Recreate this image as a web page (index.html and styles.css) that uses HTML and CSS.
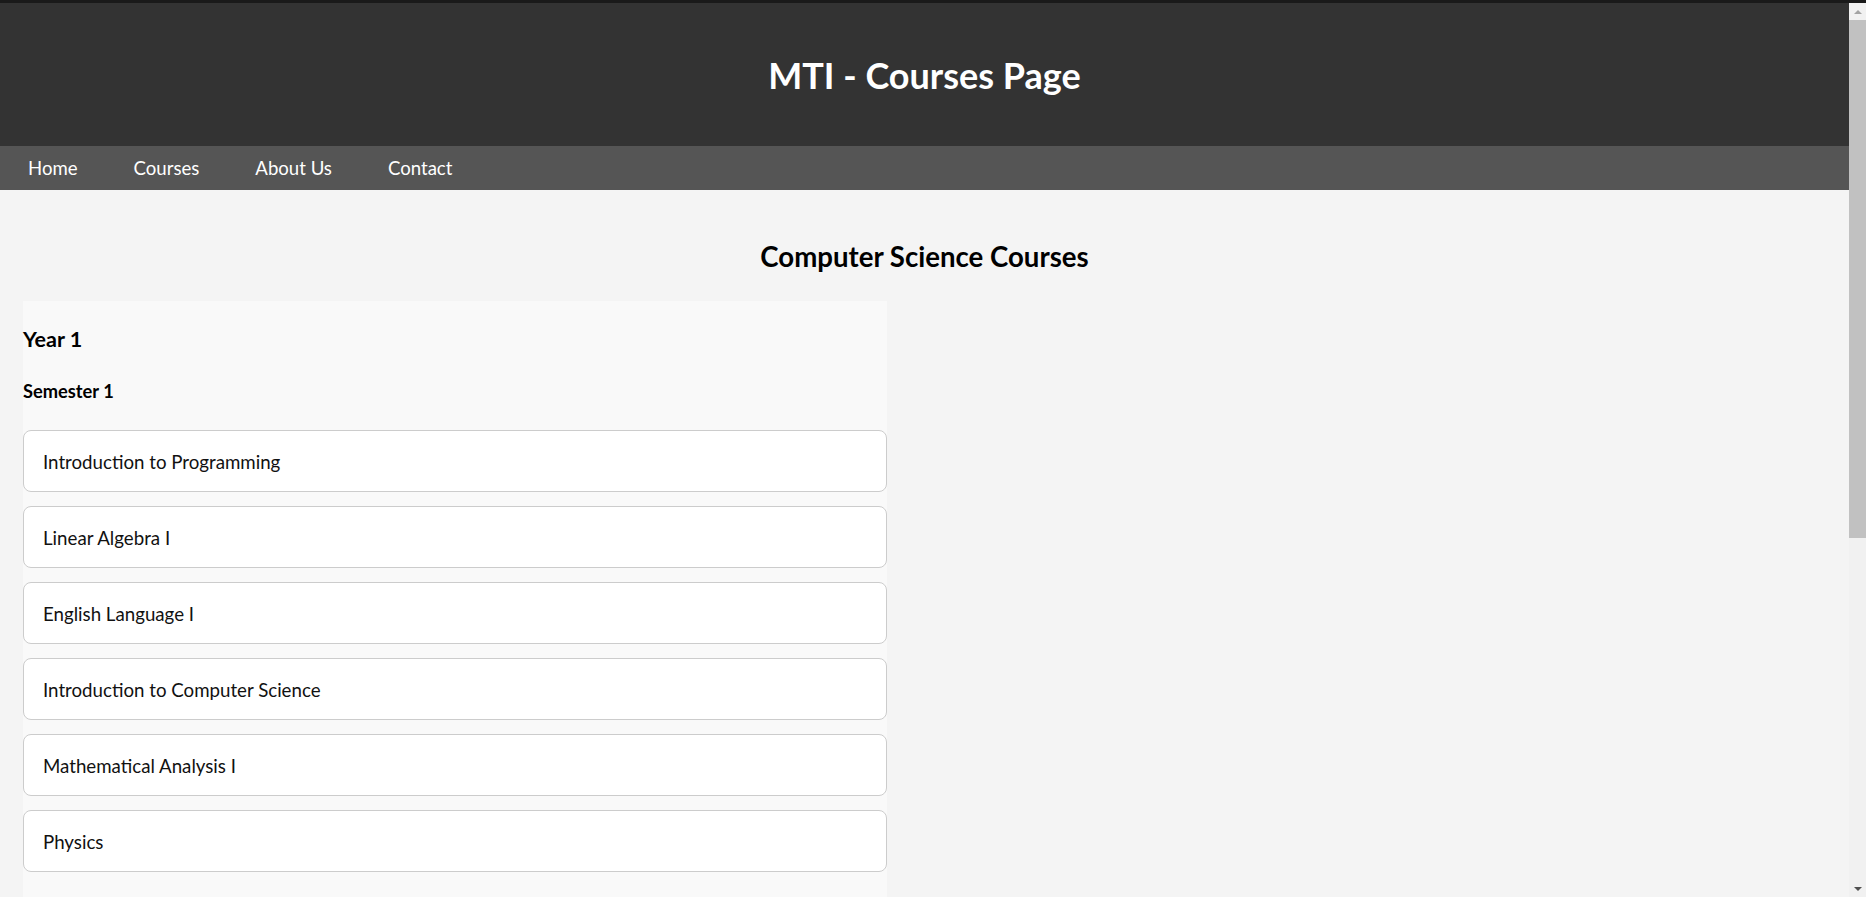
FILE: index.html
```html
<!DOCTYPE html>
<html lang="en">
<head>
<meta charset="utf-8">
<title>MTI - Courses Page</title>
<link rel="stylesheet" href="styles.css">
</head>
<body>
<header class="site-header">
  <h1 class="site-title">MTI - Courses Page</h1>
</header>
<nav class="main-nav">
  <ul class="nav-list">
    <li><a class="nav-link" href="#">Home</a></li>
    <li><a class="nav-link" href="#">Courses</a></li>
    <li><a class="nav-link" href="#">About Us</a></li>
    <li><a class="nav-link" href="#">Contact</a></li>
  </ul>
</nav>
<main class="content">
  <h2 class="page-title">Computer Science Courses</h2>
  <section class="year">
    <h3 class="year-title">Year 1</h3>
    <div class="semester">
      <h4 class="semester-title">Semester 1</h4>
      <ul class="course-list">
        <li class="course">Introduction to Programming</li>
        <li class="course">Linear Algebra I</li>
        <li class="course">English Language I</li>
        <li class="course">Introduction to Computer Science</li>
        <li class="course">Mathematical Analysis I</li>
        <li class="course">Physics</li>
      </ul>
    </div>
    <div class="semester">
      <h4 class="semester-title">Semester 2</h4>
      <ul class="course-list">
        <li class="course">Object Oriented Programming</li>
        <li class="course">Linear Algebra II</li>
        <li class="course">English Language II</li>
        <li class="course">Discrete Mathematics</li>
        <li class="course">Mathematical Analysis II</li>
        <li class="course">Electronics</li>
      </ul>
    </div>
  </section>
</main>
<div class="scrollbar" aria-hidden="true">
  <div class="scroll-btn"><span class="arrow arrow-up"></span></div>
  <div class="scroll-thumb"></div>
  <div class="scroll-fill"></div>
  <div class="scroll-btn"><span class="arrow arrow-down"></span></div>
</div>
</body>
</html>
```
FILE: styles.css
```css
html {
  background: #f4f4f4;
}
body {
  margin: 0 17px 0 0;
  background: #f4f4f4;
  color: #000;
  font-family: Lato, "Open Sans", sans-serif;
}
.site-header {
  background: #333;
  border-top: 3px solid #1a1a1a;
  height: 143px;
  display: flex;
  align-items: center;
  justify-content: center;
}
.site-title {
  margin: 0;
  color: #fff;
  font-size: 36px;
  font-weight: 700;
  line-height: 40px;
}
.main-nav {
  background: #555;
  height: 44px;
}
.nav-list {
  list-style: none;
  margin: 0;
  padding: 0;
  display: flex;
}
.nav-link {
  display: block;
  padding: 0 28px;
  line-height: 44px;
  color: #fff;
  text-decoration: none;
  font-size: 18.6px;
}
.content {
  padding: 0 23px 35px;
}
.page-title {
  margin: 50px 0 0;
  text-align: center;
  font-size: 27.6px;
  font-weight: 700;
  line-height: 34px;
}
.year {
  margin-top: 27px;
  width: 864px;
  background: #f9f9f9;
  padding: 25px 0 20px;
}
.year-title {
  margin: 0;
  font-size: 21.5px;
  font-weight: 700;
  line-height: 26px;
}
.semester-title {
  margin: 28px 0 0;
  font-size: 18.3px;
  font-weight: 700;
  line-height: 22px;
}
.course-list {
  list-style: none;
  margin: 28px 0 0;
  padding: 0;
}
.course {
  background: #fff;
  border: 1px solid #ccc;
  border-radius: 8px;
  padding: 21px 19px 19px;
  line-height: 20px;
  font-size: 18.7px;
  color: #111;
  margin-bottom: 14px;
}
.scrollbar {
  position: fixed;
  top: 0;
  right: 0;
  width: 17px;
  height: 100vh;
  box-sizing: border-box;
  border-top: 3px solid #1a1a1a;
  background: #f1f1f1;
  display: flex;
  flex-direction: column;
}
.scroll-btn {
  height: 17px;
  flex: none;
  display: flex;
  align-items: center;
  justify-content: center;
}
.scroll-thumb {
  height: 518px;
  flex: none;
  background: #c1c1c1;
}
.scroll-fill {
  flex: 1;
}
.arrow {
  width: 0;
  height: 0;
  border-left: 4px solid transparent;
  border-right: 4px solid transparent;
}
.arrow-up {
  border-bottom: 4px solid #a3a3a3;
}
.arrow-down {
  border-top: 4px solid #505050;
}
```
